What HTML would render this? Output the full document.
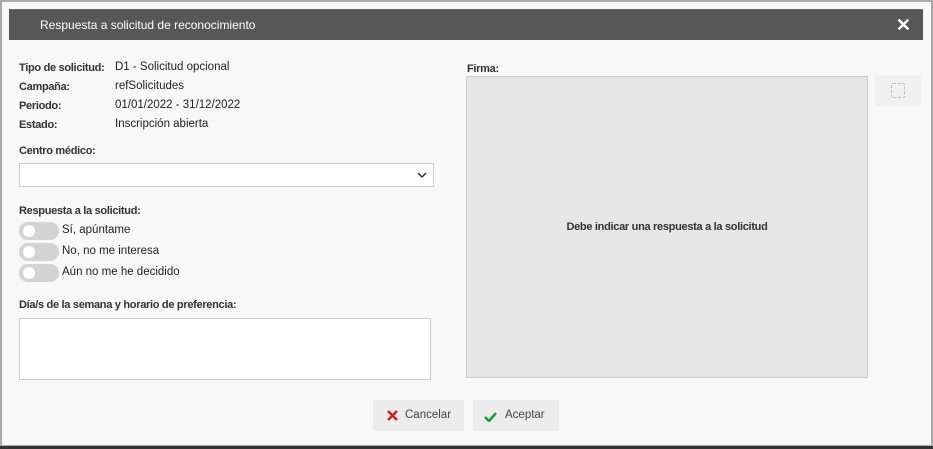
<!DOCTYPE html>
<html><head><style>
body{margin:0;width:933px;height:449px;background:#a9a9a9;font-family:"Liberation Sans",sans-serif;font-size:11.5px;color:#222;overflow:hidden;position:relative}
.win{position:absolute;left:2px;top:2px;width:929px;height:443px;background:#f8f8f8}
.bot{position:absolute;left:0;top:446px;width:933px;height:3px;background:#333}
.hdr{position:absolute;left:9px;top:9px;width:914px;height:31px;background:#575757;border-top:1px solid #6a6a6a;box-sizing:border-box;color:#fff;font-size:12px;line-height:30px;padding-left:31px}
.x{position:absolute;right:12px;top:0;font-size:18px;font-weight:bold}
.a{position:absolute;white-space:nowrap}
.b{font-weight:bold;font-size:11px;letter-spacing:-0.3px;color:#333}
.box{position:absolute;background:#fff;border:1px solid #ccc;box-sizing:border-box}
.tg{position:absolute;left:19px;width:40px;height:18px;border-radius:9px;background:#d3d3d3}
.tg:after{content:"";position:absolute;left:4px;top:3px;width:12px;height:12px;border-radius:6px;background:#fff}
.btn{position:absolute;top:400px;height:31px;background:#ececec;line-height:31px;color:#444}
</style></head><body>
<div class="win"></div><div class="bot"></div>
<div class="hdr">Respuesta a solicitud de reconocimiento<span class="x">✕</span></div>
<div class="a b" style="left:19px;top:62px">Tipo de solicitud:</div><div class="a" style="left:115px;top:61px">D1 - Solicitud opcional</div>
<div class="a b" style="left:19px;top:81px">Campaña:</div><div class="a" style="left:115px;top:80px">refSolicitudes</div>
<div class="a b" style="left:19px;top:100px">Periodo:</div><div class="a" style="left:115px;top:99px">01/01/2022 - 31/12/2022</div>
<div class="a b" style="left:19px;top:119px">Estado:</div><div class="a" style="left:115px;top:118px">Inscripción abierta</div>
<div class="a b" style="left:19px;top:145px">Centro médico:</div>
<div class="box" style="left:19px;top:163px;width:415px;height:24px"><svg style="position:absolute;right:6px;top:8px" width="10" height="7"><path d="M1 1l4 4 4-4" stroke="#333" stroke-width="1.5" fill="none"/></svg></div>
<div class="a b" style="left:19px;top:205px">Respuesta a la solicitud:</div>
<div class="tg" style="top:222px"></div><div class="a" style="left:62px;top:224px">Sí, apúntame</div>
<div class="tg" style="top:243px"></div><div class="a" style="left:62px;top:245px">No, no me interesa</div>
<div class="tg" style="top:264px"></div><div class="a" style="left:62px;top:266px">Aún no me he decidido</div>
<div class="a b" style="left:19px;top:299px">Día/s de la semana y horario de preferencia:</div>
<div class="box" style="left:19px;top:318px;width:412px;height:62px"></div>
<div class="a b" style="left:467px;top:63px">Firma:</div>
<div class="box" style="left:466px;top:76px;width:402px;height:302px;background:#e6e6e6;text-align:center;line-height:300px;font-size:11px;font-weight:bold;letter-spacing:-0.3px;color:#333">Debe indicar una respuesta a la solicitud</div>
<div class="a" style="left:875px;top:75px;width:46px;height:31px;background:#f0f0f0"><div style="position:absolute;left:16px;top:8px;width:12px;height:13px;border:1px dashed #bbb;border-radius:2px"></div></div>
<div class="btn" style="left:373px;width:91px"><svg style="position:absolute;left:14px;top:10px" width="11" height="11"><path d="M1 1l9 9M10 1l-9 9" stroke="#c22" stroke-width="2.5"/></svg><span style="position:absolute;left:32px">Cancelar</span></div>
<div class="btn" style="left:473px;width:86px"><svg style="position:absolute;left:11px;top:11px" width="13" height="11"><path d="M1 6l4 4 7-8" stroke="#1a9a3a" stroke-width="2.5" fill="none"/></svg><span style="position:absolute;left:32px">Aceptar</span></div>
</body></html>
